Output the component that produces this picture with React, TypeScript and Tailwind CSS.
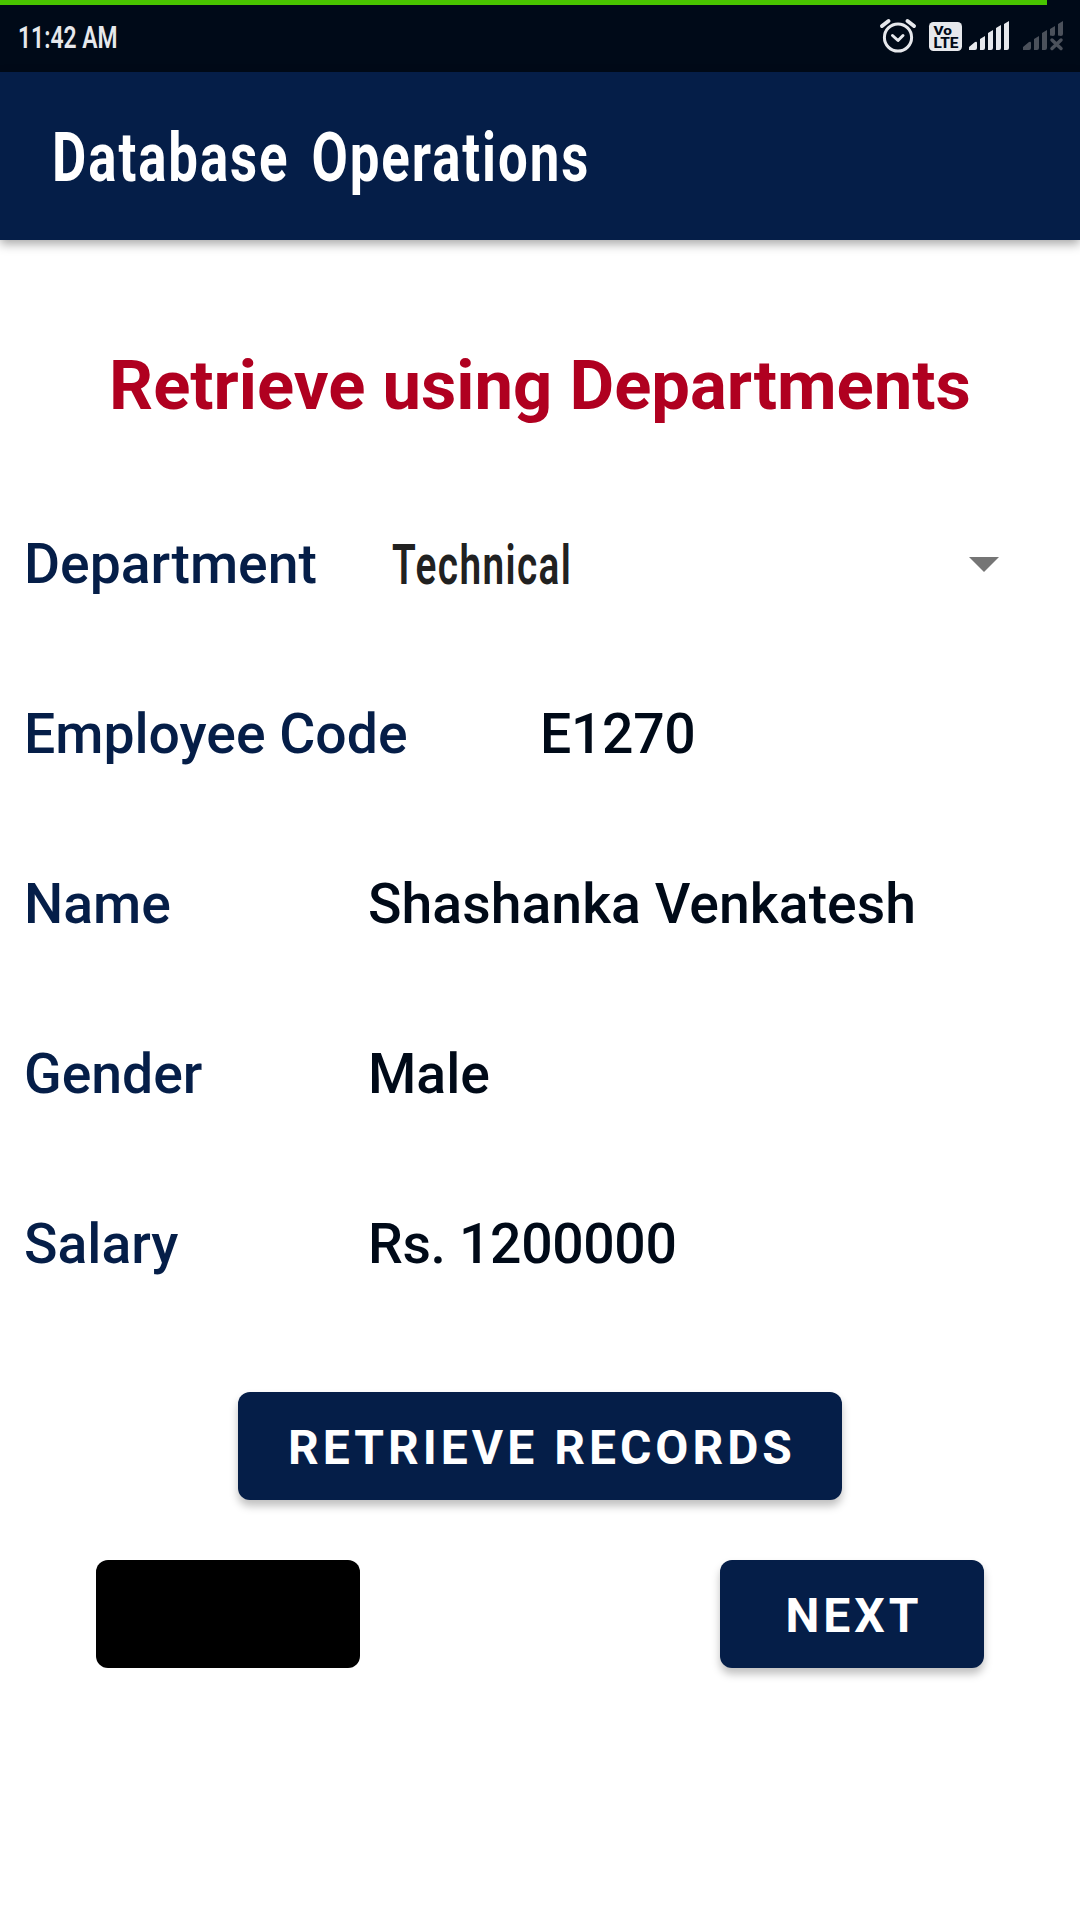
import React from "react";

const rows = [
  { label: "Employee Code", value: "E1270", labelWidth: "w-[516px]", tracking: "tracking-[-0.3px]" },
  { label: "Name", value: "Shashanka Venkatesh", labelWidth: "w-[344px]", tracking: "tracking-[0.06px]" },
  { label: "Gender", value: "Male", labelWidth: "w-[344px]", tracking: "tracking-normal" },
  { label: "Salary", value: "Rs. 1200000", labelWidth: "w-[344px]", tracking: "tracking-[-0.35px]" },
];

function StatusIcons() {
  return (
    <svg className="mb-[5px] h-10 w-[190px]" viewBox="878 16 190 40" fill="none">
      <g stroke="#e6e8ec" strokeWidth="3" strokeLinecap="round" strokeLinejoin="round">
        <circle cx="898" cy="37.5" r="13.6" />
        <path d="M892.5 35.5l5.5 5 5-5" />
        <path d="M882 26l6.5-5M907.5 21l6.5 5" strokeWidth="4" />
      </g>
      <rect x="929" y="22" width="33" height="29" rx="4.5" fill="#e6e8ec" />
      <g fill="#000a18" fontFamily="Roboto, sans-serif" fontWeight="800">
        <text x="933.5" y="35" fontSize="13.5" textLength="18.5" lengthAdjust="spacingAndGlyphs">Vo</text>
        <text x="933.5" y="47.5" fontSize="14" textLength="25" lengthAdjust="spacingAndGlyphs">LTE</text>
      </g>
      <path fill="#e6e8ec" d="M969 50v-3l6-5q2-1 2 1v5q0 2-2 2zM980 50V39l5-3v12q0 2-2 2zM988 50V33l5-3v18q0 2-2 2zM996 50V28l5-3v23q0 2-2 2zM1004 50V24l5-3v27q0 2-2 2z" />
      <path fill="#4b515b" d="M1023 50v-3l6-5q2-1 2 1v5q0 2-2 2zM1034 50V39l5-3v12q0 2-2 2zM1042 50V33l5-3v18q0 2-2 2zM1050 35.5V29l5-3v8q0 2-2 2zM1058 35.5V24l5-3v13q0 2-2 2z" />
      <path stroke="#4b515b" strokeWidth="3.5" strokeLinecap="round" d="M1052 40l9 8.5M1061 40l-9 8.5" />
    </svg>
  );
}

export default function App() {
  return (
    <div className="flex h-[1920px] w-[1080px] flex-col overflow-hidden bg-white font-['Roboto',sans-serif] font-medium text-[#000a18]">
      <div className="flex h-[72px] shrink-0 flex-col bg-[#000a18]">
        <div className="h-[5px] w-[1047px] shrink-0 bg-[#48c400]" />
        <div className="flex grow items-center justify-between pr-3 pl-[18px]">
          <span className="origin-left scale-x-[0.715] pb-[3px] text-[32px] leading-none font-semibold whitespace-nowrap text-[#e6e8ec]">
            11:42 AM
          </span>
          <StatusIcons />
        </div>
      </div>
      <header className="flex h-[168px] shrink-0 items-center bg-[#051e48] pl-[50px] shadow-[0_4px_10px_rgba(0,0,0,0.35)]">
        <h1 className="ml-[2px] origin-left scale-x-[0.765] pt-[3px] text-[69px] leading-none font-bold tracking-[2.5px] [word-spacing:9px] whitespace-nowrap text-white">
          Database Operations
        </h1>
      </header>

      <h2 className="mt-[101px] h-[90px] shrink-0 text-center text-[68.8px] leading-[90px] font-bold text-[#b00020]">
        Retrieve using Departments
      </h2>

      <main className="mt-[49px] flex shrink-0 flex-col text-[55.3px] leading-[64px]">
        <div className="flex h-[170px] items-center pr-[81px] pl-6">
          <span className="w-[368px] text-[#051e48]">Department</span>
          <div className="flex grow items-center justify-between">
            <span className="origin-left scale-x-[0.705] text-[55px] font-semibold tracking-[2px] whitespace-nowrap text-[#212121]">
              Technical
            </span>
            <svg className="mb-[2px] h-[15px] w-[30px]" viewBox="0 0 30 15">
              <path d="M0 0h30L15 15z" fill="#757575" />
            </svg>
          </div>
        </div>
        {rows.map((row) => (
          <div key={row.label} className="flex h-[170px] items-center pl-6">
            <span className={`${row.labelWidth} shrink-0 whitespace-nowrap text-[#051e48]`}>{row.label}</span>
            <span className={`${row.tracking} whitespace-nowrap`}>{row.value}</span>
          </div>
        ))}
      </main>

      <div className="mt-[62px] flex shrink-0 flex-col items-center gap-[60px] text-[48px] leading-none font-bold tracking-[4px] text-white">
        <button className="h-[108px] w-[604px] rounded-xl bg-[#051e48] pt-[3px] pl-[4px] whitespace-nowrap shadow-[0_6px_8px_rgba(0,0,0,0.25)]">
          RETRIEVE RECORDS
        </button>
        <div className="flex w-full justify-between px-24">
          <button aria-label="Previous" className="h-[108px] w-[264px] rounded-xl bg-black" />
          <button className="h-[108px] w-[264px] rounded-xl bg-[#051e48] pt-[3px] pl-[4px] shadow-[0_6px_8px_rgba(0,0,0,0.25)]">
            NEXT
          </button>
        </div>
      </div>
    </div>
  );
}
